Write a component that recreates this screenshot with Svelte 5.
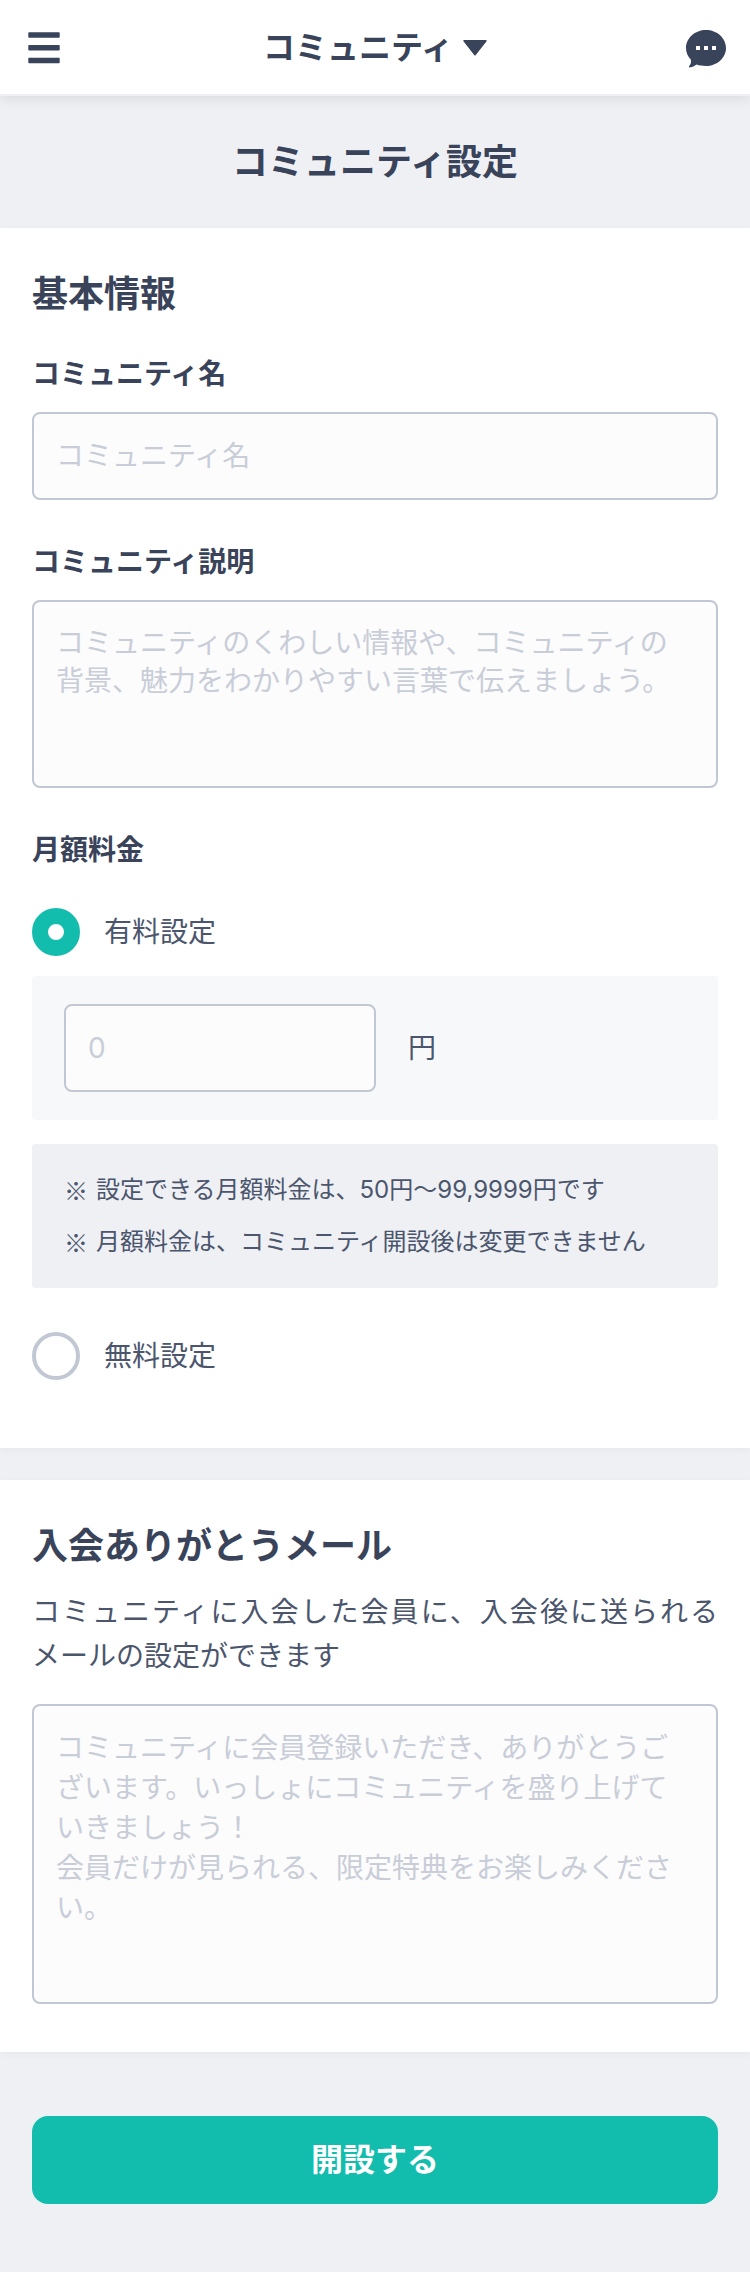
<script lang="ts">
  let communityName: string = '';
  let description: string = '';
  let plan: string = 'paid';
  let price: string = '';
  let thanksMail: string = '';

  const notes: string[] = [
    '設定できる月額料金は、50円〜99,9999円です',
    '月額料金は、コミュニティ開設後は変更できません',
  ];

  const descriptionHint =
    'コミュニティのくわしい情報や、コミュニティの背景、魅力をわかりやすい言葉で伝えましょう。';

  const mailHint =
    'コミュニティに会員登録いただき、ありがとうございます。いっしょにコミュニティを盛り上げていきましょう！\n' +
    '会員だけが見られる、限定特典をお楽しみください。';
</script>

<header class="app-bar" lang="ja">
  <button type="button" class="icon-btn" aria-label="メニュー">
    <svg width="40" height="40" viewBox="0 0 40 40" fill="currentColor">
      <rect x="4.300" y="4.300" width="31.400" height="5.500" rx="0.800" />
      <rect x="4.300" y="17" width="31.400" height="5.500" rx="0.800" />
      <rect x="4.300" y="29.800" width="31.400" height="5.500" rx="0.800" />
    </svg>
  </button>
  <button type="button" class="switcher">
    コミュニティ
    <svg width="24" height="16" viewBox="0 0 24 16" fill="currentColor">
      <path d="M1 0h22a.8.8 0 0 1 .6 1.300L12.800 15a1 1 0 0 1-1.600 0L.4 1.300A.8.8 0 0 1 1 0z" />
    </svg>
  </button>
  <button type="button" class="icon-btn" aria-label="メッセージ">
    <svg width="40" height="40" viewBox="0 0 40 40">
      <path
        fill="currentColor"
        d="M20 2C9 2 0 10 0 20c0 4.500 1.700 8.300 4.800 11.500C5.300 34 5 36 3.200 38c-.5.700-.2 1.400.6 1.400 2.500-.2 4.700-1.200 6.700-2.800C13.300 37.600 16.500 38 20 38c11 0 20-8 20-18S31 2 20 2z"
      />
      <path fill="#fff" d="M10 18h4v4h-4zM18 18h4v4h-4zM26 18h4v4h-4z" />
    </svg>
  </button>
</header>

<main lang="ja">
  <h1>コミュニティ設定</h1>

  <form on:submit|preventDefault>
    <section class="card basic">
      <h2>基本情報</h2>

      <div class="field">
        <label class="field-label" for="community-name">コミュニティ名</label>
        <input type="text" id="community-name" class="control" bind:value={communityName} placeholder="コミュニティ名" />
      </div>

      <div class="field">
        <label class="field-label" for="description">コミュニティ説明</label>
        <textarea id="description" class="control description" bind:value={description} placeholder={descriptionHint}></textarea>
      </div>

      <fieldset>
        <legend class="field-label">月額料金</legend>

        <label class="radio">
          <input type="radio" name="plan" value="paid" bind:group={plan} />
          有料設定
        </label>

        <div class="price">
          <input type="text" inputmode="numeric" id="price" class="control" bind:value={price} placeholder="0" aria-label="月額料金" />
          <label for="price">円</label>
        </div>

        <ul class="notes">
          {#each notes as note}
            <li><span class="mark">※</span>{note}</li>
          {/each}
        </ul>

        <label class="radio">
          <input type="radio" name="plan" value="free" bind:group={plan} />
          無料設定
        </label>
      </fieldset>
    </section>

    <section class="card mail">
      <h2 id="mail-title">入会ありがとうメール</h2>
      <p>コミュニティに入会した会員に、入会後に送られるメールの設定ができます</p>
      <textarea class="control mail-body" bind:value={thanksMail} placeholder={mailHint} aria-labelledby="mail-title"></textarea>
    </section>

    <div class="actions">
      <button type="submit" class="submit">開設する</button>
    </div>
  </form>
</main>

<style>
  :global(body) {
    background: #eff0f4;
    color: #4b566d;
    font-family: Inter, "Noto Sans CJK JP", sans-serif;
    font-size: 28px;
    line-height: 44px;
  }

  button,
  input,
  textarea {
    font: inherit;
    color: inherit;
    margin: 0;
    box-sizing: border-box;
  }

  .app-bar {
    position: relative;
    display: grid;
    grid-template-columns: 1fr auto 1fr;
    align-items: center;
    height: 96px;
    padding: 0 24px;
    box-sizing: border-box;
    background: #fff;
    box-shadow: inset 0 -2px #eff0f4, 0 4px 12px rgba(0, 0, 0, 0.08);
    color: #39435a;
  }

  .app-bar button {
    padding: 0;
    border: 0;
    background: none;
    cursor: pointer;
  }

  .app-bar svg {
    display: block;
  }

  .icon-btn:last-child {
    justify-self: end;
  }

  .icon-btn:first-child {
    justify-self: start;
  }

  .switcher {
    display: flex;
    align-items: center;
    gap: 10px;
    font-size: 32px;
    font-weight: 700;
  }

  h1,
  h2 {
    margin: 0;
    color: #39435a;
    font-size: 36px;
    font-weight: 700;
    line-height: 52px;
  }

  h1 {
    padding: 40px 32px;
    text-align: center;
  }

  .card {
    padding: 40px 32px 48px;
    background: #fff;
    box-shadow: 0 2px 8px rgba(0, 0, 0, 0.04);
  }

  .card + .card {
    margin-top: 32px;
  }

  .card.basic {
    padding-bottom: 68px;
  }

  .basic h2 {
    margin-bottom: 32px;
  }

  .field {
    margin-bottom: 40px;
  }

  .field-label {
    display: block;
    margin-bottom: 16px;
    color: #39435a;
    font-weight: 700;
  }

  .control {
    display: block;
    width: 100%;
    height: 88px;
    padding: 22px;
    border: 2px solid #c2c8d3;
    border-radius: 8px;
    background: #fcfcfc;
    outline: none;
    resize: none;
  }

  .control:focus {
    border-color: #12bdae;
  }

  .control::placeholder {
    color: #c8cdd8;
    opacity: 1;
  }

  input.control {
    padding: 0 22px;
  }

  .description {
    height: 188px;
    line-height: 38px;
  }

  .mail-body {
    height: 300px;
    line-height: 40px;
  }

  fieldset {
    min-width: 0;
    margin: 0;
    padding: 0;
    border: 0;
  }

  legend {
    padding: 0;
  }

  fieldset .field-label {
    margin-bottom: 36px;
  }

  .radio {
    display: flex;
    align-items: center;
    gap: 24px;
    height: 48px;
    cursor: pointer;
  }

  .radio input {
    appearance: none;
    width: 48px;
    height: 48px;
    border: 4px solid #c2c8d3;
    border-radius: 50%;
    background: #fff;
  }

  .radio input:checked {
    border: 16px solid #12bdae;
  }

  .price {
    display: flex;
    align-items: center;
    gap: 32px;
    margin: 20px 0 24px;
    padding: 28px 32px;
    border-radius: 4px;
    background: #f7f8fa;
  }

  .price .control {
    width: 312px;
  }

  .notes {
    margin: 0 0 44px;
    padding: 20px 32px;
    border-radius: 4px;
    background: #eff0f4;
    font-size: 24px;
    line-height: 52px;
    list-style: none;
  }

  .notes li {
    display: flex;
    gap: 8px;
  }

  /* Inter has its own narrow ※ */
  .mark {
    font-family: "Noto Sans CJK JP", sans-serif;
  }

  .mail p {
    margin: 18px 0 26px;
    line-break: strict;
    text-align: justify;
  }

  .actions {
    padding: 64px 32px 68px;
  }

  .submit {
    display: block;
    width: 100%;
    height: 88px;
    padding: 0;
    border: 0;
    border-radius: 16px;
    background: #12bdae;
    color: #fff;
    font-size: 32px;
    font-weight: 700;
    cursor: pointer;
  }
</style>
